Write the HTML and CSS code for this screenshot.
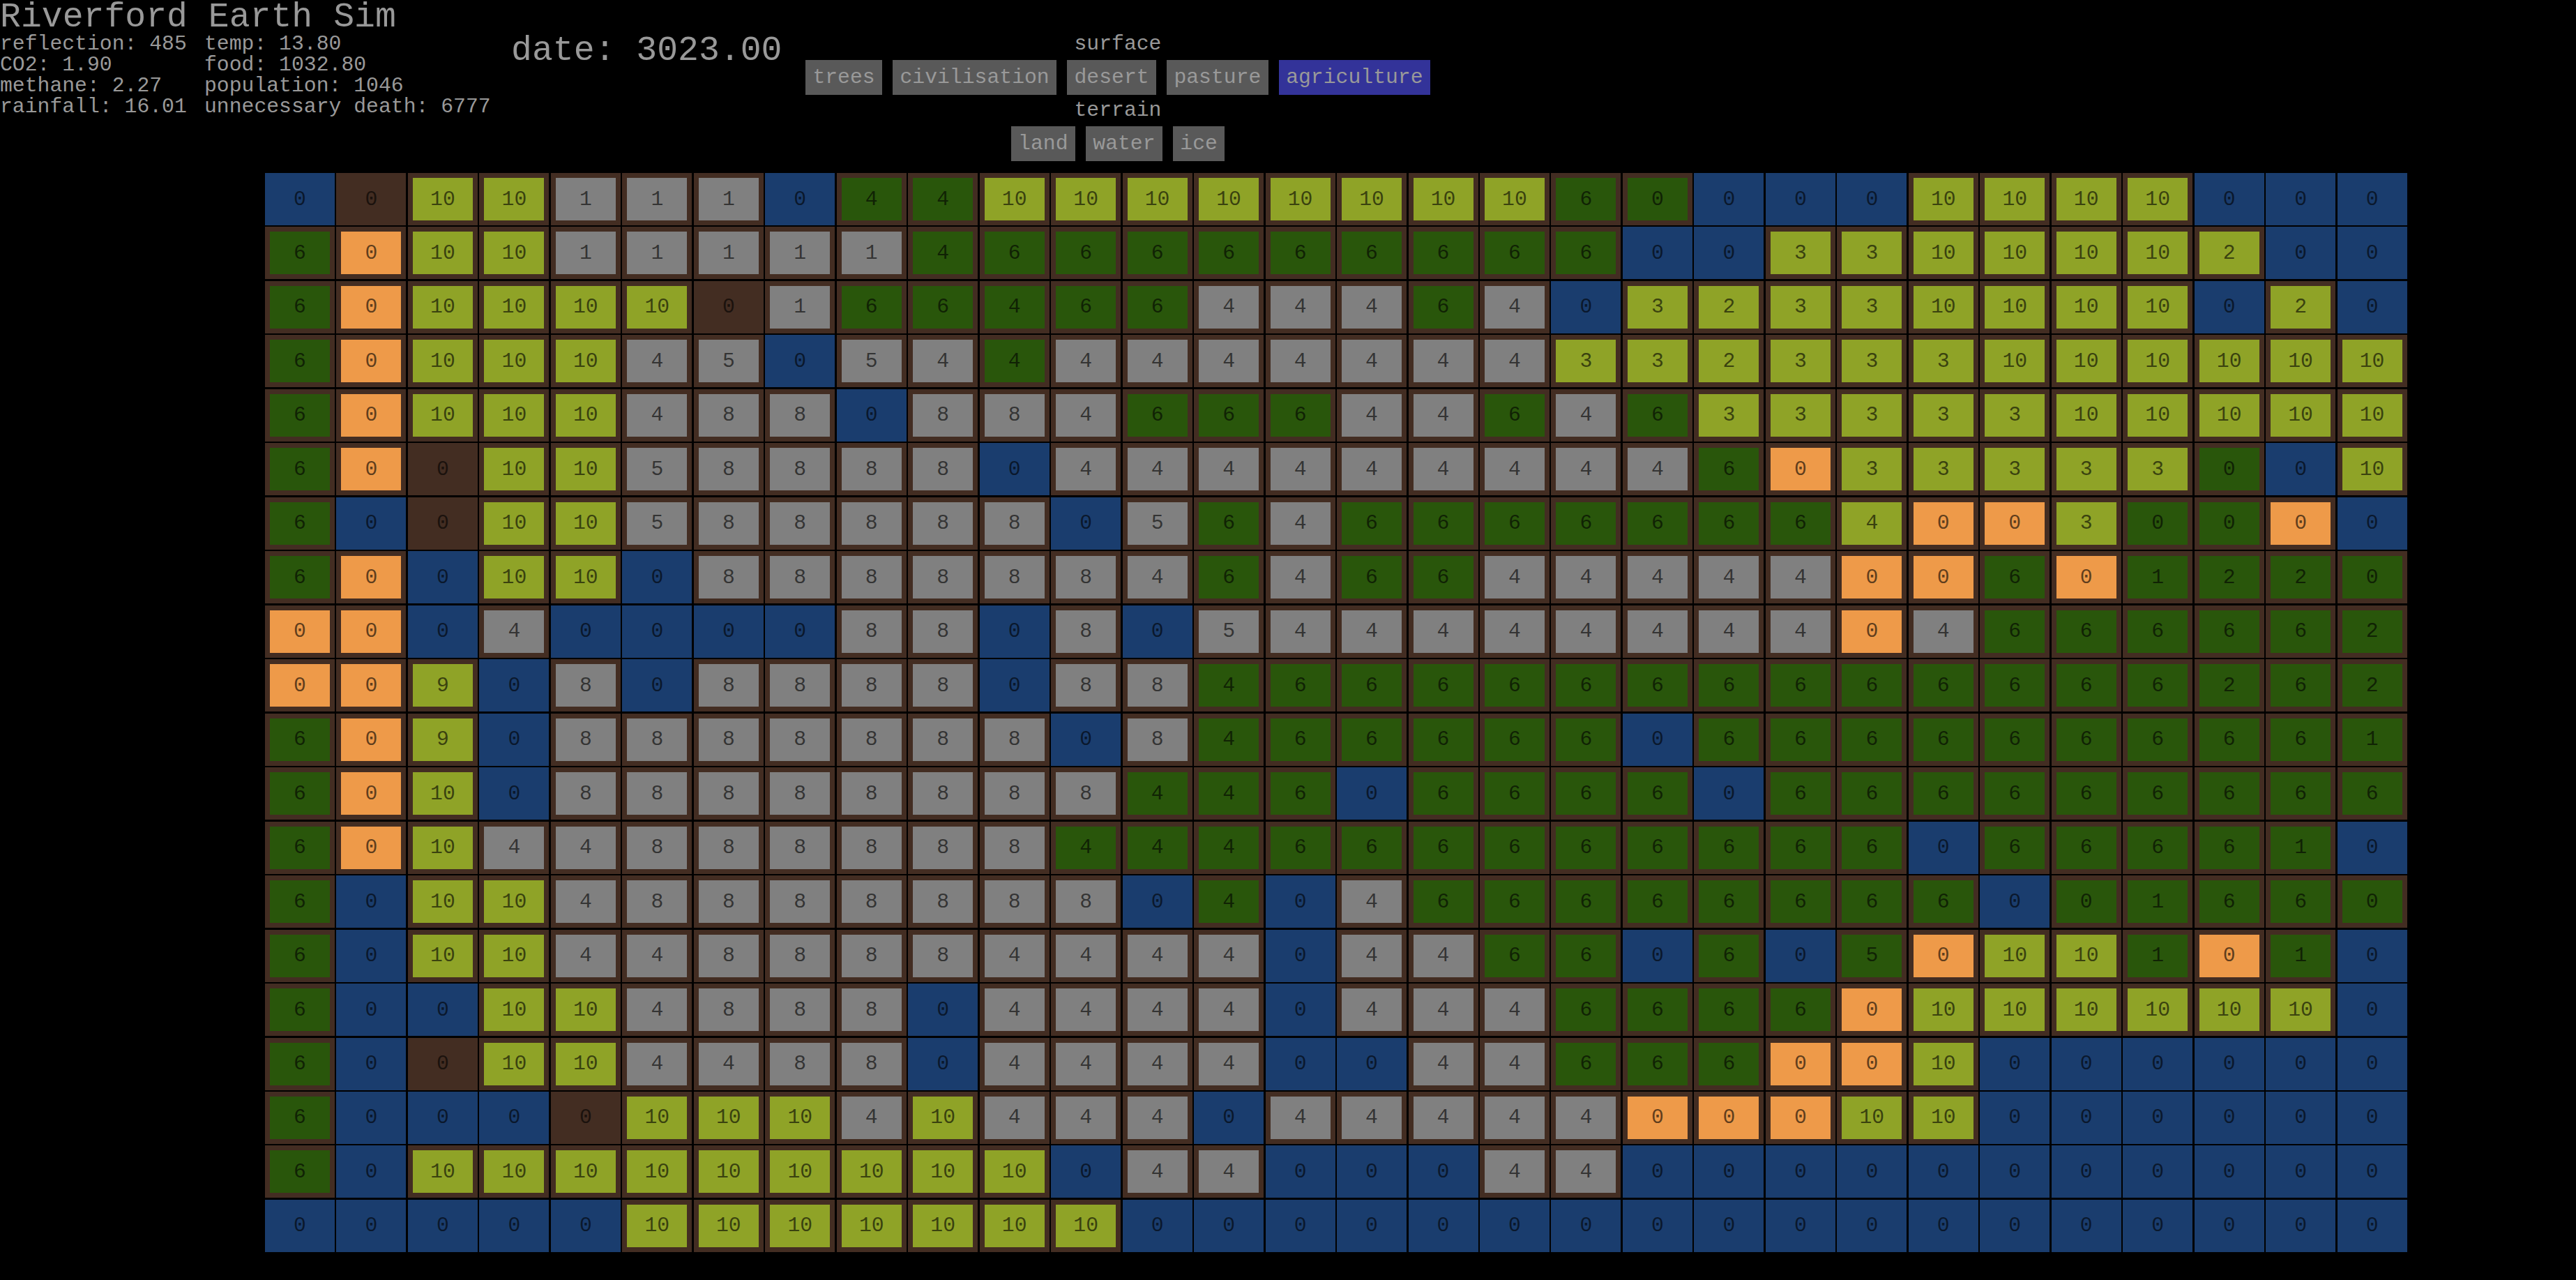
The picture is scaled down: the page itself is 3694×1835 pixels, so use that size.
FILE: index.html
```html
<!DOCTYPE html>
<html lang="en">
<head>
    <meta charset="UTF-8">
    <title>Riverford Earth Sim</title>
    <link rel="stylesheet" href="styles.css">
</head>

<body>

<header class="top">
    <!-- Title and running totals -->
    <section class="summary">
        <h1 class="title">Riverford Earth Sim</h1>
        <div class="stats">
            <div>reflection: 485</div>
            <div>temp: 13.80</div>
            <div>CO2: 1.90</div>
            <div>food: 1032.80</div>
            <div>methane: 2.27</div>
            <div>population: 1046</div>
            <div>rainfall: 16.01</div>
            <div>unnecessary death: 6777</div>
        </div>
    </section>

    <div class="date">date: 3023.00</div>

    <!-- Map layer switches -->
    <section class="controls">
        <div class="group-label">surface</div>
        <div class="buttons">
            <button type="button">trees</button>
            <button type="button">civilisation</button>
            <button type="button">desert</button>
            <button type="button">pasture</button>
            <button type="button" class="active">agriculture</button>
        </div>
        <div class="group-label">terrain</div>
        <div class="buttons">
            <button type="button">land</button>
            <button type="button">water</button>
            <button type="button">ice</button>
        </div>
    </section>
</header>

<main class="map" id="map"></main>

<script src="script.js"></script>

</body>
</html>
```

FILE: styles.css
```css
/* Page styling */
body {
    margin: 0;
    background-color: #000000;
    color: #999999;
    font-family: "Liberation Mono", "Courier New", monospace;
    font-size: 29.76px;
    line-height: 30px;
}

/* Header */
.top {
    display: flex;
    gap: 30px;
}

.summary {
    width: 703px;
}

.title {
    margin: 2px 0 0;
    font-size: 49.8px;
    font-weight: normal;
    line-height: 46px;
}

.stats {
    display: grid;
    grid-template-columns: 293px 410px;
    white-space: nowrap;
}

.date {
    margin: 48px 2px 0 0;
    font-size: 49.8px;
    line-height: 50px;
    white-space: nowrap;
}

/* Layer switches */
.controls {
    width: 899px;
    margin-top: 48px;
    text-align: center;
}

.buttons {
    display: flex;
    justify-content: center;
    gap: 15px;
    margin: 8px 0 7px;
}

button {
    height: 50px;
    padding: 0 10.4px;
    border: none;
    background-color: #595959;
    color: #999999;
    font: inherit;
}

button.active {
    background-color: #333399;
}

/* Map grid */
.map {
    display: grid;
    grid-template-columns: repeat(30, 100px);
    grid-template-rows: repeat(20, 75px);
    gap: 2.48px;
    margin: 10px 0 0 380px;
}

.cell {
    display: flex;
    align-items: center;
    justify-content: center;
    box-sizing: border-box;
    border: 7.5px solid #432d22;
    color: rgba(0, 0, 0, 0.62);
}

.water { background-color: #1a3d6e; border-color: #1a3d6e; }
.bare { background-color: #432d22; }
.tree { background-color: #29560b; }
.crop { background-color: #8fa327; }
.city { background-color: #808080; }
.sand { background-color: #ee9a49; }
```

FILE: script.js
```js
// Letter is the surface, number is the value shown in the cell
const rows = [
    'w0 b0 y10 y10 s1 s1 s1 w0 g4 g4 y10 y10 y10 y10 y10 y10 y10 y10 g6 g0 w0 w0 w0 y10 y10 y10 y10 w0 w0 w0',
    'g6 o0 y10 y10 s1 s1 s1 s1 s1 g4 g6 g6 g6 g6 g6 g6 g6 g6 g6 w0 w0 y3 y3 y10 y10 y10 y10 y2 w0 w0',
    'g6 o0 y10 y10 y10 y10 b0 s1 g6 g6 g4 g6 g6 s4 s4 s4 g6 s4 w0 y3 y2 y3 y3 y10 y10 y10 y10 w0 y2 w0',
    'g6 o0 y10 y10 y10 s4 s5 w0 s5 s4 g4 s4 s4 s4 s4 s4 s4 s4 y3 y3 y2 y3 y3 y3 y10 y10 y10 y10 y10 y10',
    'g6 o0 y10 y10 y10 s4 s8 s8 w0 s8 s8 s4 g6 g6 g6 s4 s4 g6 s4 g6 y3 y3 y3 y3 y3 y10 y10 y10 y10 y10',
    'g6 o0 b0 y10 y10 s5 s8 s8 s8 s8 w0 s4 s4 s4 s4 s4 s4 s4 s4 s4 g6 o0 y3 y3 y3 y3 y3 g0 w0 y10',
    'g6 w0 b0 y10 y10 s5 s8 s8 s8 s8 s8 w0 s5 g6 s4 g6 g6 g6 g6 g6 g6 g6 y4 o0 o0 y3 g0 g0 o0 w0',
    'g6 o0 w0 y10 y10 w0 s8 s8 s8 s8 s8 s8 s4 g6 s4 g6 g6 s4 s4 s4 s4 s4 o0 o0 g6 o0 g1 g2 g2 g0',
    'o0 o0 w0 s4 w0 w0 w0 w0 s8 s8 w0 s8 w0 s5 s4 s4 s4 s4 s4 s4 s4 s4 o0 s4 g6 g6 g6 g6 g6 g2',
    'o0 o0 y9 w0 s8 w0 s8 s8 s8 s8 w0 s8 s8 g4 g6 g6 g6 g6 g6 g6 g6 g6 g6 g6 g6 g6 g6 g2 g6 g2',
    'g6 o0 y9 w0 s8 s8 s8 s8 s8 s8 s8 w0 s8 g4 g6 g6 g6 g6 g6 w0 g6 g6 g6 g6 g6 g6 g6 g6 g6 g1',
    'g6 o0 y10 w0 s8 s8 s8 s8 s8 s8 s8 s8 g4 g4 g6 w0 g6 g6 g6 g6 w0 g6 g6 g6 g6 g6 g6 g6 g6 g6',
    'g6 o0 y10 s4 s4 s8 s8 s8 s8 s8 s8 g4 g4 g4 g6 g6 g6 g6 g6 g6 g6 g6 g6 w0 g6 g6 g6 g6 g1 w0',
    'g6 w0 y10 y10 s4 s8 s8 s8 s8 s8 s8 s8 w0 g4 w0 s4 g6 g6 g6 g6 g6 g6 g6 g6 w0 g0 g1 g6 g6 g0',
    'g6 w0 y10 y10 s4 s4 s8 s8 s8 s8 s4 s4 s4 s4 w0 s4 s4 g6 g6 w0 g6 w0 g5 o0 y10 y10 g1 o0 g1 w0',
    'g6 w0 w0 y10 y10 s4 s8 s8 s8 w0 s4 s4 s4 s4 w0 s4 s4 s4 g6 g6 g6 g6 o0 y10 y10 y10 y10 y10 y10 w0',
    'g6 w0 b0 y10 y10 s4 s4 s8 s8 w0 s4 s4 s4 s4 w0 w0 s4 s4 g6 g6 g6 o0 o0 y10 w0 w0 w0 w0 w0 w0',
    'g6 w0 w0 w0 b0 y10 y10 y10 s4 y10 s4 s4 s4 w0 s4 s4 s4 s4 s4 o0 o0 o0 y10 y10 w0 w0 w0 w0 w0 w0',
    'g6 w0 y10 y10 y10 y10 y10 y10 y10 y10 y10 w0 s4 s4 w0 w0 w0 s4 s4 w0 w0 w0 w0 w0 w0 w0 w0 w0 w0 w0',
    'w0 w0 w0 w0 w0 y10 y10 y10 y10 y10 y10 y10 w0 w0 w0 w0 w0 w0 w0 w0 w0 w0 w0 w0 w0 w0 w0 w0 w0 w0'
];

const surfaces = { w: 'water', b: 'bare', g: 'tree', y: 'crop', s: 'city', o: 'sand' };
const map = document.getElementById('map');

// Build one div per map square
rows.forEach(row => {
    row.split(' ').forEach(square => {
        const cell = document.createElement('div');
        cell.className = 'cell ' + surfaces[square[0]];
        cell.textContent = square.slice(1);
        map.appendChild(cell);
    });
});
```
